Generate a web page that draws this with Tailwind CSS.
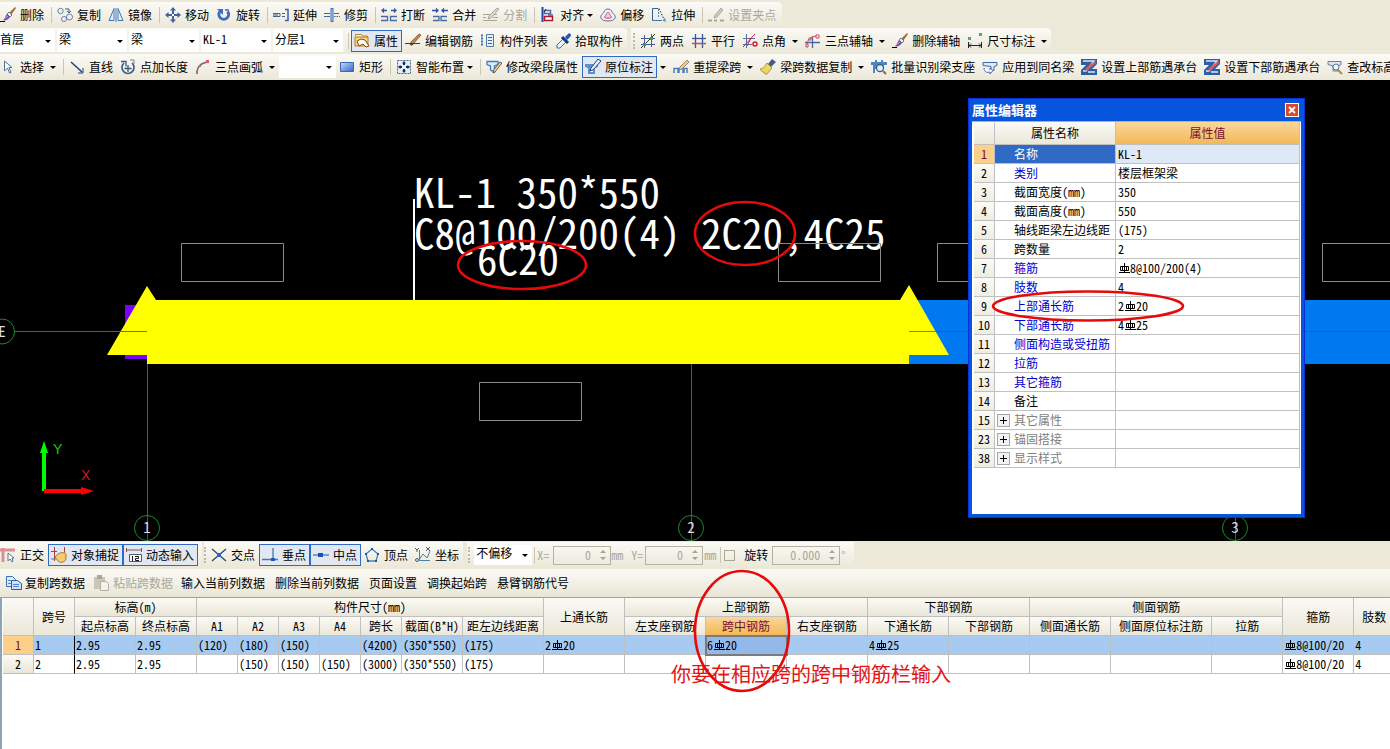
<!DOCTYPE html>
<html lang="zh-CN">
<head>
<meta charset="utf-8">
<title>属性编辑器</title>
<script src="https://cdn.jsdelivr.net/npm/@tailwindcss/browser@4"></script>
</head>
<body class="relative flex min-h-screen flex-col overflow-x-hidden bg-[#ece9d8] font-['Noto_Sans_Mono_CJK_SC','Noto_Sans_CJK_SC','Liberation_Mono',monospace] text-xs text-black">

<svg class="absolute size-0" aria-hidden="true">
  <linearGradient id="g-blue" x1="0" y1="0" x2="1" y2="1"><stop offset="0" stop-color="#c8dcff"/><stop offset="1" stop-color="#2f62c8"/></linearGradient>
  <symbol id="rebar" viewBox="0 0 12 12"><path d="M2.500 3.500h8v4h-8zM6.500 0v10M4.500 3.500v4M8.500 3.500v4M1 9.500h11" fill="none" stroke="currentColor"/></symbol>
  <symbol id="brush" viewBox="0 0 16 16"><path d="M15 0l1 1-5 7-2-2z" fill="#a9682f"/><path d="M9 5l3 3-2 2-3-3z" fill="#e8eefc" stroke="#5f76b8"/><path d="M7 7l3 3c-2 3-5 4-7 3 2-1 2-4 4-6z" fill="#6b4fa8"/><path d="M0 14.500h5" stroke="#000"/><path d="M4 12l4-3" stroke="#e7a0c0"/></symbol>
  <symbol id="copy" viewBox="0 0 16 16"><g fill="#eef3fb" stroke="#6c8099"><circle cx="3.500" cy="4" r="2.700"/><circle cx="7" cy="12" r="2.500"/><circle cx="12.500" cy="10" r="3"/></g><path d="M8 2h4v3M10 4l2 2 2-2" fill="none" stroke="#36598f"/></symbol>
  <symbol id="mirror" viewBox="0 0 16 16"><path d="M6 1.500v12H1zM10 1.500v12h5z" fill="#e5effc" stroke="#4774b4"/><path d="M8 1v14" stroke="#4774b4"/></symbol>
  <symbol id="move" viewBox="0 0 16 16"><path d="M8 2v12M2 8h12" stroke="#40659c" stroke-width="2"/><path d="M5 3.500L8 0l3 3.500zM5 12.500L8 16l3-3.500zM3.500 5L0 8l3.500 3zM12.500 5L16 8l-3.500 3z" fill="#40659c"/><path d="M7 7h2v2H7z" fill="#fff"/></symbol>
  <symbol id="rotate" viewBox="0 0 16 16"><path d="M4 4.500a4.800 4.800 0 1 0 7.500 0" fill="none" stroke="#3f6dbb" stroke-width="3"/><path d="M1 2h6v6z" fill="#3f6dbb"/><path d="M9 3h4" stroke="#6488cc" stroke-width="2"/></symbol>
  <symbol id="extend" viewBox="0 0 16 16"><path d="M0 6.500h7v3H0M9 6.500h3M9 9.500h3" stroke="#45658f" fill="none"/><path d="M0 8h5" stroke="#2f5ba0"/><path d="M12 2.500h3v11h-3" stroke="#2f63bb" stroke-width="1.500" fill="none"/></symbol>
  <symbol id="trim" viewBox="0 0 16 16"><path d="M8 1v14" stroke="#3a6fc0" stroke-width="3"/><path d="M8 2v12" stroke="#b9d3f5"/><path d="M0 6.500h6M0 9.500h6M10 6.500h5" stroke="#45658f"/><path d="M10 9.500h6" stroke="#45658f" stroke-dasharray="1.500 1"/></symbol>
  <symbol id="break" viewBox="0 0 16 16"><path d="M1 3.500h5M10 3.500h5M3 1.500L1 3.500l2 2M13 1.500l2 2-2 2" fill="none" stroke="#3858a0" stroke-width="1.300"/><path d="M0 9.500h6.500v4H0M16 9.500H9.500v4H16" fill="none" stroke="#486ba6" stroke-width="1.300"/></symbol>
  <symbol id="join" viewBox="0 0 16 16"><path d="M0 3.500h6M10 3.500h6M4 1.500l2 2-2 2M12 1.500l-2 2 2 2" fill="none" stroke="#2d4fb0" stroke-width="1.300"/><path d="M1 9.500h6v4H1M15 9.500H9v4h6" fill="none" stroke="#486ba6" stroke-width="1.300"/></symbol>
  <symbol id="split" viewBox="0 0 16 16"><path d="M0 7.500h14M0 13.500h14M0 10.500h3M10 10.500h5" stroke="#a9a698"/><path d="M14 1l2 1-8 9-3 1 1-3z" fill="#ddd9ca" stroke="#aaa796"/></symbol>
  <symbol id="align" viewBox="0 0 16 16"><path d="M2.500 0v15" stroke="#2448a8" stroke-width="2"/><path d="M4.500 3.500h6v3h-6z" fill="#fff" stroke="#4767a6" stroke-width="1.500"/><path d="M4.500 9.500h8v4h-8z" fill="#fff" stroke="#b01830" stroke-width="1.500"/><path d="M6 2l-2 3M8 8h5" stroke="#1d2e70"/></symbol>
  <symbol id="offset" viewBox="0 0 16 16"><path d="M1 11c-1-3 2-4 3-6 1-4 7-4 8 0 1 2 4 3 3 6-1 4-13 4-14 0z" fill="#f1eef7" stroke="#5f6d90"/><path d="M4.500 10.500c0-2 2-2 2-4 1-1.500 2-1.500 3 0 0 2 2 2 2 4-1 1-6 1-7 0z" fill="#f9c2cc" stroke="#bb5f78"/></symbol>
  <symbol id="stretch" viewBox="0 0 16 16"><path d="M7 1.500H1.500v12H11" fill="none" stroke="#35618e"/><path d="M8 1.500L13.500 13.500" stroke="#222" stroke-dasharray="1.500 1.500"/><path d="M3 13.500h12M13 11l2 2.500-2 2M7.500 2v9" stroke="#4b7fb5" fill="none" stroke-dasharray="2 1"/></symbol>
  <symbol id="grip" viewBox="0 0 16 16"><path d="M0 13.500h4M6 13.500h3M12 13.500h4" stroke="#aaa796" stroke-width="2"/><path d="M13 1l2 2-6 7-3 1 1-3z" fill="#ccc8b8" stroke="#b1ae9f"/></symbol>
  <symbol id="props" viewBox="0 0 16 16"><path d="M1.500 3V1.500h6l1 1.500h5v5" fill="#fff6cf" stroke="#b38a32"/><path d="M1 4h13v9H1z" fill="#fbd67a" stroke="#b3791b"/><path d="M3 8l4-2 4 1 4 6-3 1-3-3-4 2z" fill="#fff" stroke="#85480f"/></symbol>
  <symbol id="pencil" viewBox="0 0 16 16"><path d="M14 1l2 1-8 9-3 1 1-3z" fill="#c28a4e" stroke="#69401a" stroke-width=".7"/><path d="M0 10.500h9l-3 2M9 10.500h6" stroke="#463b3b" fill="none"/></symbol>
  <symbol id="list" viewBox="0 0 16 16"><path d="M1 2.500h3M1 5.500h3M1 8.500h3M1 11.500h3" stroke="#3c70b8" stroke-width="2" stroke-dasharray="2 1"/><path d="M6.500 1.500h7v12h-7z" fill="#e8f0fb" stroke="#58779f"/><path d="M8 4.500h4M8 7.500h4M8 10.500h4" stroke="#3665ad"/></symbol>
  <symbol id="dropper" viewBox="0 0 16 16"><path d="M9 5l3 3-7 7H2v-3z" fill="#e6f1ff" stroke="#3c6fb7"/><path d="M7 4l6 6" stroke="#163882" stroke-width="3"/><path d="M10 4l3-3c2-2 4 1 2 3l-3 3z" fill="#2558b0"/></symbol>
  <symbol id="ax1" viewBox="0 0 16 16"><path d="M4.500 2v13M11.500 1v13M1 5.500h14M1 11.500h14" stroke="#4a58a0"/><path d="M1 15L15 1" stroke="#2a3b3b"/><path d="M3 10h3v3H3zM10 4h3v3h-3z" fill="#3b9c3b"/></symbol>
  <symbol id="ax2" viewBox="0 0 16 16"><path d="M4.500 1v14M11.500 1v14" stroke="#3a559f" stroke-width="1.300"/><path d="M1 5.500h14" stroke="#3a559f" stroke-width="1.300"/><path d="M1 10.500h14" stroke="#c44c55" stroke-width="1.500"/></symbol>
  <symbol id="ax3" viewBox="0 0 16 16"><path d="M4.500 1v14M1 5.500h12M1 11.500h9" stroke="#5770ad"/><path d="M1 14L13 1M9 5l-4 8" stroke="#d01c38"/><circle cx="13" cy="11" r="2" fill="none" stroke="#d01c38" stroke-width="1.500"/></symbol>
  <symbol id="ax4" viewBox="0 0 16 16"><path d="M7.500 4v11M0 9.500h15" stroke="#4766a6" stroke-width="1.300"/><path d="M2 13C2 6 6 3 12 3" fill="none" stroke="#c4454f"/><path d="M1 11h2v3H1zM4 5h2v2H4zM11 2h3v3h-3z" fill="#fff" stroke="#d04353"/></symbol>
  <symbol id="dim" viewBox="0 0 16 16"><path d="M1 4h3v3H1zM12 0h3v3h-3z" fill="#5ca568"/><path d="M1.500 9v6M14.500 9v6M2 12.500h12M4 10.500l-2 2 2 2M12 10.500l2 2-2 2" fill="none" stroke="#222"/></symbol>
  <symbol id="cursor" viewBox="0 0 16 16"><path d="M4.500 2v10l3-3 2 5 1.500-.7-2-4.800h3z" fill="#fff" stroke="#5371a2"/></symbol>
  <symbol id="line" viewBox="0 0 16 16"><path d="M2 3l11 10" stroke="#1c3f85" stroke-width="1.500"/><path d="M14 9v5H9" fill="none" stroke="#1c3f85"/></symbol>
  <symbol id="ptlen" viewBox="0 0 16 16"><path d="M4 4a6 6 0 1 0 8 0" fill="none" stroke="#365984" stroke-width="1.600"/><path d="M1 2.500h5v5M8 6v7M4.500 9.500h7" fill="none" stroke="#365984" stroke-width="1.300"/><path d="M10 1h4v4" fill="none" stroke="#71869e"/></symbol>
  <symbol id="arc" viewBox="0 0 16 16"><path d="M2 14C2 8 5 4 13 3" fill="none" stroke="#687488" stroke-width="1.500"/><path d="M1 12h2v3H1zM4 6h2v2H4zM11 1h3v3h-3z" fill="#da5b63"/></symbol>
  <symbol id="rect" viewBox="0 0 16 16"><path d="M1.500 3.500h13v9h-13z" fill="url(#g-blue)" stroke="#3d67b4"/></symbol>
  <symbol id="smart" viewBox="0 0 16 16"><path d="M1.500 1.500h13v13h-13z" fill="#e3edf9" stroke="#456690" stroke-dasharray="2 1"/><path d="M8 3v3M8 10v3M3 8h3M10 8h3" stroke="#1f2e48" stroke-width="2"/><path d="M6 4.500l2-2.500 2 2.500zM6 11.500l2 2.500 2-2.500zM4.500 6L2 8l2.500 2zM11.500 6L14 8l-2.500 2z" fill="#1f2e48"/></symbol>
  <symbol id="seg" viewBox="0 0 16 16"><path d="M1 2.500h11v3L8.500 7v6l-4-2V7L1 5.500z" fill="#d5edff" stroke="#3d7fbd" stroke-width="1.300"/><path d="M14 3l2 1-7 9-2 1 .500-3z" fill="#efd094" stroke="#504030" stroke-width=".8"/></symbol>
  <symbol id="insitu" viewBox="0 0 16 16"><path d="M0 5h13v3l-3 1v6H3V9L0 8z" fill="#5d90cf"/><path d="M5 9h3v4H5z" fill="#fff"/><path d="M13 0l3 2-8 9-3 1 1-3z" fill="#e8f0fb" stroke="#203e78"/></symbol>
  <symbol id="span" viewBox="0 0 16 16"><path d="M1 14V9.500h13V14M5 14v-3h1v3M10 14v-3h1v3" fill="none" stroke="#4b7ec4" stroke-width="1.500"/><path d="M14 1l2 2-7 7-3 1 1-3z" fill="#e7ca9c" stroke="#8b7458" stroke-width=".8"/></symbol>
  <symbol id="broom" viewBox="0 0 16 16"><path d="M12 0l4 3-5 5-3-3z" fill="#465b8c"/><path d="M7 4l5 5-5 6c-2 1-3-1-3-2-2 0-3-1-4-3 3 0 5-3 7-6z" fill="#ead765" stroke="#8a7b28" stroke-width=".7"/></symbol>
  <symbol id="batch" viewBox="0 0 16 16"><path d="M0 3h4V1h2v2h4V1h2v2h4v3h-3v4h-2V6H6v4H4v4H2V6H0z" fill="#4d87c2"/><circle cx="9" cy="9" r="3.500" fill="#dff1ff" stroke="#355f8e" stroke-width="1.300"/><path d="M12 12l3 3" stroke="#a16b25" stroke-width="2"/></symbol>
  <symbol id="apply" viewBox="0 0 16 16"><path d="M1 3.500h14v3l-3 1v4H9v-4L1 6.500z" fill="#d8ebff" stroke="#4168a2"/><path d="M2 9c0 4 3 5 6 4v2l3-3.500L8 9v2" fill="#fff" stroke="#3d6eb8"/></symbol>
  <symbol id="cap" viewBox="0 0 16 16"><path d="M0 0h16v5l-5 5h5v6H0v-5l5-5H0z" fill="#2e5da8"/><path d="M2 2h11L5 12H2M7 13h7" stroke="#d9e9fa" fill="none" stroke-width="1.500"/><path d="M14 2l1 2-8 7-3 1 1-3z" fill="#e25a4c"/></symbol>
  <symbol id="check" viewBox="0 0 16 16"><path d="M1 2.500h13v3L11 7v5H6V7L1 5.500z" fill="#dce7f4" stroke="#627ea4"/><circle cx="9" cy="8" r="3" fill="#eef7ff" stroke="#60748f"/><path d="M11 11l4 4" stroke="#b18c39" stroke-width="2"/></symbol>
  <symbol id="ortho" viewBox="0 0 16 16"><path d="M0 3h15M3 1v14" stroke="#dc8f8f" stroke-width="3"/><path d="M8 6v8l2-2 2 3 1-1-1-3h2z" fill="#fff" stroke="#557593"/></symbol>
  <symbol id="snap" viewBox="0 0 16 16"><path d="M3.500 0v14M0 4.500h6M13.500 0v7" stroke="#ad3f3f"/><path d="M6 8c2-3 8-3 9-1v5c-1 4-7 4-8 2l-3-4z" fill="#f2ca70" stroke="#a97d29"/><path d="M0 12h5" stroke="#4775ae"/></symbol>
  <symbol id="dyn" viewBox="0 0 16 16"><path d="M.5 1v4M15.500 1v4M1 3h14" stroke="#934c4c"/><path d="M3.500 7.500h12v7h-12z" fill="#f8f8f8" stroke="#4f5a70"/><path d="M6.500 9v5M9 9.500h3.500v2H9.500v2H13" stroke="#1b1b1b" fill="none"/></symbol>
  <symbol id="inter" viewBox="0 0 16 16"><path d="M1 2l14 12M15 2L1 14" stroke="#34475f" stroke-width="1.300"/><path d="M6 6h4v4H6z" fill="#2465cf"/></symbol>
  <symbol id="perp" viewBox="0 0 16 16"><path d="M11 1v12M0 12.500h16" stroke="#4777ad" stroke-width="1.300"/><path d="M9 11h4v3H9z" fill="#2155b8"/></symbol>
  <symbol id="mid" viewBox="0 0 16 16"><path d="M0 8h16" stroke="#4777ad" stroke-width="1.300"/><path d="M5 6h5v4H5z" fill="#1f4fae"/></symbol>
  <symbol id="vertex" viewBox="0 0 16 16"><path d="M8 2l6 5-2 7H4L2 7z" fill="none" stroke="#4084c3" stroke-width="1.300"/><path d="M7 1h2v2H7zM13 6h2v2h-2zM11 13h2v2h-2zM3 13h2v2H3zM1 6h2v2H1z" fill="#28558c"/></symbol>
  <symbol id="coord" viewBox="0 0 16 16"><path d="M4.500 3v10.500H15M4 13l4-6 4 4 3-7" fill="none" stroke="#477fae"/><path d="M0 1l2 2 2-2M2 3v2M11 0l4 4M15 0l-4 4" stroke="#475970" fill="none"/><circle cx="2" cy="13" r="1.500" fill="none" stroke="#475970"/></symbol>
  <symbol id="docs" viewBox="0 0 16 16"><path d="M.5 1.500h6l3 3v7h-9z" fill="#dcebff" stroke="#3d70b6"/><path d="M5.500 5.500h6l4 3v6h-10z" fill="#cfe2fb" stroke="#2b5ca6"/><path d="M7 9.500h6M7 11.500h6M2 5.500h3M2 8.500h3" stroke="#5487c9"/></symbol>
  <symbol id="paste" viewBox="0 0 16 16"><path d="M1 2h11v12H1z" fill="#c9c5b7"/><path d="M4 0h5v4H4z" fill="#aaa798"/><path d="M7.500 6.500h6l2 2v7h-8z" fill="#f4f2e8" stroke="#b4b1a3"/></symbol>
</svg>

<header class="pt-[2px] leading-4 whitespace-nowrap
  [&_button]:flex [&_button]:h-[22px] [&_button]:shrink-0 [&_button]:items-center [&_button]:gap-1 [&_button]:border [&_button]:border-transparent [&_button]:pl-[2px] [&_button]:pr-[3px] [&_button>svg]:size-4 [&_button>svg]:shrink-0
  [&_button:disabled]:text-[#aca899]
  [&_button[aria-pressed=true]]:border-[#316ac5] [&_button[aria-pressed=true]]:bg-[#e1e8f2]
  [&_hr]:mr-[2px] [&_hr]:ml-[3px] [&_hr]:h-4 [&_hr]:w-px [&_hr]:shrink-0 [&_hr]:border-0 [&_hr]:bg-[#c9c6b6]
  [&_i]:border-x-[3px] [&_i]:border-t-[3px] [&_i]:border-x-transparent [&_i]:border-t-black
  [&_nav]:flex [&_nav]:h-[26px] [&_nav]:w-max [&_nav]:shrink-0 [&_nav]:items-center [&_nav]:rounded-r-sm [&_nav]:bg-linear-to-b [&_nav]:from-[#fbfaf6] [&_nav]:to-[#ebe8d8]">
  <nav aria-label="修改" class="pr-[2px]">
    <button class="-ml-[3px]"><svg><use href="#brush"/></svg>删除</button><hr>
    <button><svg><use href="#copy"/></svg>复制</button>
    <button><svg><use href="#mirror"/></svg>镜像</button><hr>
    <button><svg><use href="#move"/></svg>移动</button>
    <button><svg><use href="#rotate"/></svg>旋转</button><hr>
    <button><svg><use href="#extend"/></svg>延伸</button>
    <button><svg><use href="#trim"/></svg>修剪</button><hr>
    <button><svg><use href="#break"/></svg>打断</button>
    <button><svg><use href="#join"/></svg>合并</button>
    <button disabled><svg><use href="#split"/></svg>分割</button><hr>
    <button><svg><use href="#align"/></svg>对齐<i class="-ml-px"></i></button>
    <button><svg><use href="#offset"/></svg>偏移</button>
    <button><svg><use href="#stretch"/></svg>拉伸</button><hr>
    <button disabled><svg><use href="#grip"/></svg>设置夹点</button>
  </nav>
  <div class="flex gap-1 overflow-hidden [&_label]:flex [&_label]:h-[22px] [&_label]:w-[72px] [&_label]:items-center [&_label]:border-r-2 [&_label]:border-[#f3f1e8] [&_label]:bg-white [&_label]:pr-1 [&_select]:h-5 [&_select]:min-w-0 [&_select]:flex-1 [&_select]:appearance-none [&_select]:pb-1 [&_select]:pl-[2px] [&_select]:outline-none">
    <nav aria-label="构件">
      <label class="max-w-[57px]"><select aria-label="楼层" class="-ml-[2px]"><option>首层</option></select><i></i></label>
      <label><select aria-label="构件类别"><option>梁</option></select><i></i></label>
      <label><select aria-label="构件类型"><option>梁</option></select><i></i></label>
      <label><select aria-label="构件名称"><option>KL-1</option></select><i></i></label>
      <label><select aria-label="分层"><option>分层1</option></select><i></i></label><hr>
      <button aria-pressed="true"><svg><use href="#props"/></svg>属性</button>
      <button><svg><use href="#pencil"/></svg>编辑钢筋</button>
      <button><svg><use href="#list"/></svg>构件列表</button>
      <button><svg><use href="#dropper"/></svg>拾取构件</button>
    </nav>
    <nav aria-label="辅轴">
      <span class="mx-[2px] h-4 border-l-2 border-dotted border-[#bdb9a8]"></span>
      <button><svg><use href="#ax1"/></svg>两点</button>
      <button><svg><use href="#ax2"/></svg>平行</button>
      <button><svg><use href="#ax3"/></svg>点角<i class="ml-[2px]"></i></button>
      <button><svg><use href="#ax4"/></svg>三点辅轴<i class="ml-[2px]"></i></button>
      <button><svg><use href="#brush"/></svg>删除辅轴</button>
      <button><svg><use href="#dim"/></svg>尺寸标注<i class="ml-[2px]"></i></button>
    </nav>
  </div>
  <div class="flex overflow-hidden bg-[#fbfaf6]">
    <nav aria-label="绘图" class="min-w-full">
      <button class="-ml-[3px]"><svg><use href="#cursor"/></svg>选择<i class="ml-[2px]"></i></button><hr>
      <button><svg><use href="#line"/></svg>直线</button>
      <button><svg><use href="#ptlen"/></svg>点加长度</button>
      <button><svg><use href="#arc"/></svg>三点画弧<i class="ml-[2px]"></i></button>
      <label class="flex h-[22px] w-[57px] shrink-0 items-center bg-white pr-1"><select aria-label="画弧方式" class="h-5 min-w-0 flex-1 appearance-none"><option></option></select><i></i></label>
      <button><svg><use href="#rect"/></svg>矩形</button><hr>
      <button><svg><use href="#smart"/></svg>智能布置<i class="-ml-px"></i></button><hr>
      <button><svg><use href="#seg"/></svg>修改梁段属性</button>
      <button aria-pressed="true"><svg><use href="#insitu"/></svg>原位标注</button>
      <button aria-label="原位标注选项"><i></i></button>
      <button><svg><use href="#span"/></svg>重提梁跨<i class="ml-[2px]"></i></button>
      <button><svg><use href="#broom"/></svg>梁跨数据复制<i class="ml-[2px]"></i></button>
      <button><svg><use href="#batch"/></svg>批量识别梁支座</button>
      <button><svg><use href="#apply"/></svg>应用到同名梁</button>
      <button><svg><use href="#cap"/></svg>设置上部筋遇承台</button>
      <button><svg><use href="#cap"/></svg>设置下部筋遇承台</button>
      <button><svg><use href="#check"/></svg>查改标高</button>
    </nav>
  </div>
</header>

<main class="relative h-[461px] shrink-0 overflow-hidden bg-black">
  <svg class="h-full w-full" role="img" aria-label="梁平面图">
    <g transform="translate(0,-80)" fill="none">
      <path d="M125 305h24v54h-24z" fill="#7a00ff"/>
      <path d="M909 300h3000v64H909z" fill="#0078f0"/>
      <path d="M147 286l9 14h744l9-15 40 70h-40v9H147v-9h-40z" fill="#ff0"/>
      <path d="M909 355h1v9h-1z" fill="#009c9c"/>
      <path d="M14 331h105v1H14z" fill="#0a8a2a"/>
      <path d="M119 331h28v1h-28z" fill="#6d7d00"/>
      <g fill="#e01818"><rect x="936" y="331" width="3000" height="1"/><rect x="147" y="364" width="1" height="178"/><rect x="691" y="364" width="1" height="178"/><rect x="1235" y="500" width="1" height="42"/></g>
      <path d="M909 331h27v1h-27z" fill="#e06000"/>
      <g stroke="#1d8a2e"><circle cx="2" cy="331.500" r="12.500"/><circle cx="147" cy="528" r="12.500"/><circle cx="691" cy="528" r="12.500"/><circle cx="1235" cy="528" r="12.500"/></g>
      <g fill="#dcdce8" font-size="15" text-anchor="middle"><text x="2" y="337">E</text><text x="147" y="533">1</text><text x="691" y="533">2</text><text x="1235" y="533">3</text></g>
      <path d="M414 199v101" stroke="#fff" stroke-width="2"/>
      <g fill="#fff" font-size="41" xml:space="preserve"><text x="414" y="208">KL-1 350*550</text><text x="414" y="249">C8@100/200(4) 2C20,4C25</text><text x="477" y="275">6C20</text></g>
      <path d="M181.500 243.500h102v38h-102zM479.500 382.500h102v38h-102zM778.500 243.500h102v38h-102zM937.500 243.500h102v38h-102zM1322.500 243.500h102v38h-102z" stroke="#8a8a8a"/>
      <path d="M44 491v-40" stroke="#0f0" stroke-width="4"/><path d="M40 453l4-12 4 12z" fill="#0f0"/>
      <path d="M44 491h38" stroke="#f00" stroke-width="4"/><path d="M81 487l13 4-13 4z" fill="#f00"/>
      <g font-family="Liberation Sans" font-size="14"><text x="53" y="454" fill="#1ec81e">Y</text><text x="81" y="480" fill="#d01818">X</text></g>
    </g>
  </svg>

  <section aria-label="属性编辑器" class="absolute top-[18px] left-[968px] flex h-[420px] w-[337px] flex-col border border-[#0831d9] bg-[#0855dd] px-[3px] pb-[3px]">
    <div class="flex h-[22px] items-center justify-between pr-[2px]">
      <h2 class="text-[13px] font-bold text-white">属性编辑器</h2>
      <button aria-label="关闭" class="flex size-[14px] items-center justify-center border border-white bg-[#d8482a]"><svg class="size-2" viewBox="0 0 8 8"><path d="M1 1l6 6M7 1L1 7" stroke="#fff" stroke-width="1.800"/></svg></button>
    </div>
    <div class="flex-1 border-t border-[#9ab4d8] bg-white pl-[2px]">
      <table class="w-[326px] table-fixed border-separate border-spacing-0 leading-4 whitespace-nowrap
        [&_td]:border-r [&_td]:border-b [&_td]:border-[#c0c0c0] [&_td]:p-0 [&_th]:border-r [&_th]:border-b [&_th]:border-[#c0c0c0] [&_th]:p-0 [&_th]:font-normal
        [&_tbody_tr]:h-[19px] [&_tbody_th]:bg-linear-to-b [&_tbody_th]:from-[#fbfaf5] [&_tbody_th]:to-[#efede0]
        [&_td:nth-child(2)]:pl-[19px] [&_td:nth-child(3)]:pl-[2px] [&_td>svg]:inline [&_td>svg]:size-3 [&_td>svg]:align-[-2px]">
        <colgroup><col class="w-[21px]"><col class="w-[121px]"><col class="w-[184px]"></colgroup>
        <thead><tr class="h-[23px] bg-linear-to-b from-[#fbfaf5] to-[#eae7d8]"><th></th><th>属性名称</th><th class="bg-linear-to-b from-[#fbd59a] to-[#f2b955] text-[#7a1030]">属性值</th></tr></thead>
        <tbody>
          <tr><th class="bg-none! bg-[#fdd08a]! text-[#7a1030]">1</th><td class="bg-[#316ac5] text-white">名称</td><td class="bg-[#dfe8f6]">KL-1</td></tr>
          <tr><th>2</th><td class="text-[#0000d0]">类别</td><td>楼层框架梁</td></tr>
          <tr><th>3</th><td>截面宽度(mm)</td><td>350</td></tr>
          <tr><th>4</th><td>截面高度(mm)</td><td>550</td></tr>
          <tr><th>5</th><td>轴线距梁左边线距</td><td>(175)</td></tr>
          <tr><th>6</th><td>跨数量</td><td>2</td></tr>
          <tr><th>7</th><td class="text-[#0000d0]">箍筋</td><td><svg><use href="#rebar"/></svg>8@100/200(4)</td></tr>
          <tr><th>8</th><td class="text-[#0000d0]">肢数</td><td>4</td></tr>
          <tr><th>9</th><td class="text-[#0000d0]">上部通长筋</td><td>2<svg><use href="#rebar"/></svg>20</td></tr>
          <tr><th>10</th><td class="text-[#0000d0]">下部通长筋</td><td>4<svg><use href="#rebar"/></svg>25</td></tr>
          <tr><th>11</th><td class="text-[#0000d0]">侧面构造或受扭筋</td><td></td></tr>
          <tr><th>12</th><td class="text-[#0000d0]">拉筋</td><td></td></tr>
          <tr><th>13</th><td class="text-[#0000d0]">其它箍筋</td><td></td></tr>
          <tr><th>14</th><td>备注</td><td></td></tr>
          <tr class="text-[#808080]"><th class="text-black">15</th><td class="pl-[2px]!"><div class="flex items-center gap-1"><button aria-label="展开其它属性" class="size-[13px] border border-[#a8a8a8] bg-[#f2f2f2]"><svg viewBox="0 0 11 11"><path d="M2 5.500h7M5.500 2v7" stroke="#000"/></svg></button>其它属性</div></td><td></td></tr>
          <tr class="text-[#808080]"><th class="text-black">23</th><td class="pl-[2px]!"><div class="flex items-center gap-1"><button aria-label="展开锚固搭接" class="size-[13px] border border-[#a8a8a8] bg-[#f2f2f2]"><svg viewBox="0 0 11 11"><path d="M2 5.500h7M5.500 2v7" stroke="#000"/></svg></button>锚固搭接</div></td><td></td></tr>
          <tr class="text-[#808080]"><th class="text-black">38</th><td class="pl-[2px]!"><div class="flex items-center gap-1"><button aria-label="展开显示样式" class="size-[13px] border border-[#a8a8a8] bg-[#f2f2f2]"><svg viewBox="0 0 11 11"><path d="M2 5.500h7M5.500 2v7" stroke="#000"/></svg></button>显示样式</div></td><td></td></tr>
        </tbody>
      </table>
    </div>
  </section>
</main>

<footer class="flex flex-1 flex-col leading-4 whitespace-nowrap">
  <div class="flex h-7 items-center
    [&_button]:flex [&_button]:h-[22px] [&_button]:items-center [&_button]:gap-1 [&_button]:border [&_button]:border-transparent [&_button]:pl-[2px] [&_button]:pr-[3px] [&_button>svg]:size-4
    [&_button[aria-pressed=true]]:border-[#316ac5] [&_button[aria-pressed=true]]:bg-[#e1e8f2]
    [&_nav]:flex [&_nav]:h-[26px] [&_nav]:items-center [&_nav]:bg-linear-to-b [&_nav]:from-[#fbfaf6] [&_nav]:to-[#ebe8d8]
    [&_hr]:h-4 [&_hr]:w-px [&_hr]:border-0 [&_hr]:bg-[#c9c6b6]
    [&_div]:flex [&_div]:h-[19px] [&_div]:items-center [&_div]:border [&_div]:border-[#b5b2a2] [&_div]:pr-[3px] [&_div>svg]:h-3 [&_div>svg]:w-2
    [&_input[type=text]]:min-w-0 [&_input[type=text]]:flex-1 [&_input[type=text]]:pr-2 [&_input[type=text]]:text-right">
    <nav aria-label="捕捉" class="mr-[2px] pr-1">
      <button class="-ml-[3px]"><svg><use href="#ortho"/></svg>正交</button>
      <button aria-pressed="true"><svg><use href="#snap"/></svg>对象捕捉</button>
      <button aria-pressed="true"><svg><use href="#dyn"/></svg>动态输入</button>
    </nav>
    <nav aria-label="捕捉点" class="mr-1">
      <span class="mr-[2px] h-4 border-l-2 border-dotted border-[#bdb9a8]"></span>
      <button><svg><use href="#inter"/></svg>交点</button>
      <button aria-pressed="true"><svg><use href="#perp"/></svg>垂点</button>
      <button aria-pressed="true"><svg><use href="#mid"/></svg>中点</button>
      <button><svg><use href="#vertex"/></svg>顶点</button>
      <button><svg><use href="#coord"/></svg>坐标</button>
    </nav>
    <nav aria-label="偏移" class="pr-2 text-[#aca899]">
      <span class="mr-1 ml-px h-4 border-l-2 border-dotted border-[#bdb9a8]"></span>
      <label class="flex h-5 w-[58px] items-center bg-white pr-1 text-black"><select aria-label="偏移方式" class="h-5 min-w-0 flex-1 appearance-none pb-1 pl-[2px]"><option>不偏移</option></select><i class="border-x-[3px] border-t-[3px] border-x-transparent border-t-black"></i></label>
      <hr class="mx-[2px]">
      <label for="dx" class="w-4">X=</label>
      <div class="w-[58px]"><input id="dx" type="text" value="0" disabled><svg viewBox="0 0 8 12"><path d="M1 4l3-3 3 3zM1 8l3 3 3-3z" fill="#a7a495"/></svg></div>
      <span class="w-5">mm</span>
      <label for="dy" class="w-[14px]">Y=</label>
      <div class="w-[58px]"><input id="dy" type="text" value="0" disabled><svg viewBox="0 0 8 12"><path d="M1 4l3-3 3 3zM1 8l3 3 3-3z" fill="#a7a495"/></svg></div>
      <span class="ml-px w-4">mm</span>
      <hr class="mr-[3px]">
      <input id="rot" type="checkbox" disabled class="size-[11px] appearance-none border border-[#aca899]">
      <label for="rot" class="mr-1 ml-[9px] text-black">旋转</label>
      <div class="w-[68px]"><input aria-label="旋转角度" type="text" value="0.000" disabled><svg viewBox="0 0 8 12"><path d="M1 4l3-3 3 3zM1 8l3 3 3-3z" fill="#a7a495"/></svg></div>
      <span class="ml-px">°</span>
    </nav>
  </div>
  <nav aria-label="跨数据" class="flex h-7 items-center gap-[10px] bg-linear-to-b from-[#fbfaf6] to-[#e9e6d6] pl-[6px]">
    <button class="-mr-[2px] flex items-center gap-[3px]"><svg class="size-4"><use href="#docs"/></svg>复制跨数据</button>
    <button disabled class="-mr-[2px] flex items-center gap-1 text-[#aca899]"><svg class="size-4"><use href="#paste"/></svg>粘贴跨数据</button>
    <button>输入当前列数据</button>
    <button>删除当前列数据</button>
    <button>页面设置</button>
    <button>调换起始跨</button>
    <button>悬臂钢筋代号</button>
  </nav>
  <div class="flex-1 overflow-hidden border-t border-l-2 border-[#8ea4b4] bg-white pl-px">
    <table class="w-[1392px] table-fixed border-separate border-spacing-0
      [&_td]:border-r [&_td]:border-b [&_td]:border-[#c0c0c0] [&_td]:p-0 [&_td]:pl-px [&_th]:border-r [&_th]:border-b [&_th]:border-[#c0c0c0] [&_th]:p-0 [&_th]:font-normal
      [&_tr]:h-[19px] [&_th]:bg-linear-to-b [&_th]:from-[#fbfaf5] [&_th]:to-[#eae7d8] [&_td>svg]:inline [&_td>svg]:size-3 [&_td>svg]:align-[-2px]
      [&_tbody_td:nth-child(2)]:border-r-black">
      <colgroup><col class="w-[31px]"><col class="w-[41px]"><col class="w-[61px]"><col class="w-[61px]"><col class="w-[41px]"><col class="w-[41px]"><col class="w-[41px]"><col class="w-[41px]"><col class="w-[41px]"><col class="w-[61px]"><col class="w-[81px]"><col class="w-[81px]"><col class="w-[81px]"><col class="w-[81px]"><col class="w-[81px]"><col class="w-[81px]"><col class="w-[81px]"><col class="w-[81px]"><col class="w-[101px]"><col class="w-[71px]"><col class="w-[71px]"><col class="w-[41px]"></colgroup>
      <thead>
        <tr><th rowspan="2"></th><th rowspan="2">跨号</th><th colspan="2">标高(m)</th><th colspan="7">构件尺寸(mm)</th><th rowspan="2">上通长筋</th><th colspan="3">上部钢筋</th><th colspan="2">下部钢筋</th><th colspan="3">侧面钢筋</th><th rowspan="2">箍筋</th><th rowspan="2">肢数</th></tr>
        <tr><th>起点标高</th><th>终点标高</th><th>A1</th><th>A2</th><th>A3</th><th>A4</th><th>跨长</th><th>截面(B*H)</th><th>距左边线距离</th><th>左支座钢筋</th><th class="from-[#fbd59a]! to-[#f2b955]! text-[#7a1030]">跨中钢筋</th><th>右支座钢筋</th><th>下通长筋</th><th>下部钢筋</th><th>侧面通长筋</th><th>侧面原位标注筋</th><th>拉筋</th></tr>
      </thead>
      <tbody>
        <tr class="bg-[#a6caf0]"><th class="bg-none! bg-[#fdd08a]! text-[#7a1030]">1</th><td>1</td><td>2.95</td><td>2.95</td><td>(120)</td><td>(180)</td><td>(150)</td><td></td><td>(4200)</td><td>(350*550)</td><td>(175)</td><td>2<svg><use href="#rebar"/></svg>20</td><td></td><td class="bg-[#94b8ea] outline-2 -outline-offset-1 outline-[#7b7b7b]">6<svg><use href="#rebar"/></svg>20</td><td></td><td>4<svg><use href="#rebar"/></svg>25</td><td></td><td></td><td></td><td></td><td><svg><use href="#rebar"/></svg>8@100/20</td><td>4</td></tr>
        <tr><th>2</th><td>2</td><td>2.95</td><td>2.95</td><td></td><td>(150)</td><td>(150)</td><td>(150)</td><td>(3000)</td><td>(350*550)</td><td>(175)</td><td></td><td></td><td></td><td></td><td></td><td></td><td></td><td></td><td></td><td><svg><use href="#rebar"/></svg>8@100/20</td><td>4</td></tr>
      </tbody>
    </table>
  </div>
</footer>

<!-- Review marks drawn over the workspace -->
<svg class="pointer-events-none absolute top-0 left-0 h-full w-full" aria-hidden="true">
  <g fill="none" stroke="#e60a0a" stroke-width="2.600">
    <ellipse cx="745" cy="233.500" rx="50" ry="31.500"/>
    <ellipse cx="522" cy="265" rx="64" ry="24"/>
    <ellipse cx="1088" cy="306" rx="95" ry="14.500"/>
    <ellipse cx="742" cy="631" rx="47" ry="60"/>
  </g>
</svg>
<p class="pointer-events-none absolute top-[660px] left-[671px] text-xl leading-7 font-light text-[#e01414]">你要在相应跨的跨中钢筋栏输入</p>
</body>
</html>
